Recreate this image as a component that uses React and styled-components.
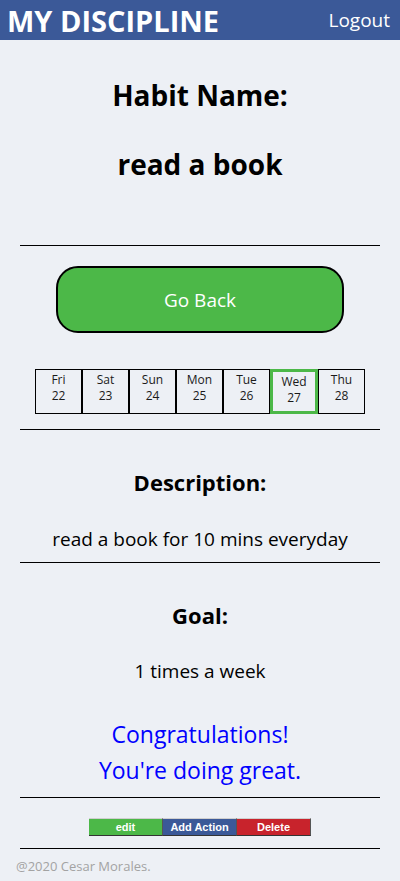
import React from "react";
import styled, { createGlobalStyle } from "styled-components";

const GlobalStyle = createGlobalStyle`
  body {
    margin: 0;
    background: #edf0f5;
    font-family: "Open Sans", "Noto Sans", sans-serif;
    color: #000;
  }
`;

const Page = styled.div`
  width: 400px;
  min-height: 881px;
  display: flex;
  flex-direction: column;
`;

const Header = styled.header`
  height: 40px;
  background: #3b5998;
  display: flex;
  align-items: center;
  justify-content: space-between;
  padding: 0 10px 0 7px;
  color: #fff;
`;

const Brand = styled.div`
  font-size: 29px;
  font-weight: 700;
`;

const Logout = styled.div`
  font-size: 19px;
`;

const Heading = styled.h1`
  margin: ${(p) => p.top}px 0 0;
  font-size: 28px;
  font-weight: 700;
  line-height: 34px;
  text-align: center;
`;

const Label = styled.h2`
  margin: ${(p) => p.top}px 0 0;
  font-size: 22px;
  font-weight: 700;
  line-height: 30px;
  text-align: center;
`;

const Text = styled.p`
  margin: ${(p) => p.top}px 0 0;
  font-size: 19px;
  line-height: 26px;
  text-align: center;
`;

const Rule = styled.hr`
  margin: ${(p) => p.top}px 20px 0;
  border: none;
  border-top: 1px solid #000;
  height: 0;
`;

const GoBack = styled.button`
  align-self: center;
  margin-top: 20px;
  width: 288px;
  height: 67px;
  border: 2px solid #000;
  border-radius: 22px;
  background: #4cb848;
  color: #fff;
  font-family: inherit;
  font-size: 19px;
  cursor: pointer;
`;

const Week = styled.div`
  align-self: center;
  margin-top: 36px;
  display: flex;
`;

const Day = styled.div`
  box-sizing: border-box;
  width: ${(p) => (p.today ? 48 : 47)}px;
  height: 45px;
  padding-top: 2px;
  border: ${(p) => (p.today ? "3px solid #4cb848" : "1px solid #000")};
  text-align: center;
  font-size: 12px;
  line-height: 16px;
  color: #1a1a1a;
`;

const Cheer = styled.div`
  margin-top: 32px;
  color: #0000ff;
  font-size: 23px;
  line-height: 36px;
  text-align: center;
`;

const Actions = styled.div`
  align-self: center;
  margin-top: 20px;
  display: flex;
`;

const ActionButton = styled.button`
  box-sizing: border-box;
  width: 74px;
  height: 18px;
  padding: 0;
  border: none;
  border-top: 1px solid #cfcfcf;
  border-bottom: 1px solid #333;
  border-right: 1px solid #555;
  background: ${(p) => p.color};
  color: #fff;
  font-family: "Liberation Sans", Arial, sans-serif;
  font-size: 11px;
  font-weight: 700;
  line-height: 15px;
  cursor: pointer;
`;

const Footer = styled.footer`
  margin: 9px 0 0 16px;
  font-size: 13px;
  line-height: 16px;
  color: #a3a3a3;
`;

const days = [
  ["Fri", 22],
  ["Sat", 23],
  ["Sun", 24],
  ["Mon", 25],
  ["Tue", 26],
  ["Wed", 27],
  ["Thu", 28],
];

const App = () => {
  return (
    <Page>
      <GlobalStyle />
      <Header>
        <Brand>MY DISCIPLINE</Brand>
        <Logout>Logout</Logout>
      </Header>
      <Heading top={38}>Habit Name:</Heading>
      <Heading top={35}>read a book</Heading>
      <Rule top={64} />
      <GoBack>Go Back</GoBack>
      <Week>
        {days.map(([name, date]) => (
          <Day key={name} today={name === "Wed"}>
            {name}
            <br />
            {date}
          </Day>
        ))}
      </Week>
      <Rule top={15} />
      <Label top={37}>Description:</Label>
      <Text top={29}>read a book for 10 mins everyday</Text>
      <Rule top={10} />
      <Label top={37}>Goal:</Label>
      <Text top={28}>1 times a week</Text>
      <Cheer>
        Congratulations!
        <br />
        You're doing great.
      </Cheer>
      <Rule top={9} />
      <Actions>
        <ActionButton color="#4cb848">edit</ActionButton>
        <ActionButton color="#3b5998">Add Action</ActionButton>
        <ActionButton color="#c8232c">Delete</ActionButton>
      </Actions>
      <Rule top={12} />
      <Footer>@2020 Cesar Morales.</Footer>
    </Page>
  );
};

export default App;
